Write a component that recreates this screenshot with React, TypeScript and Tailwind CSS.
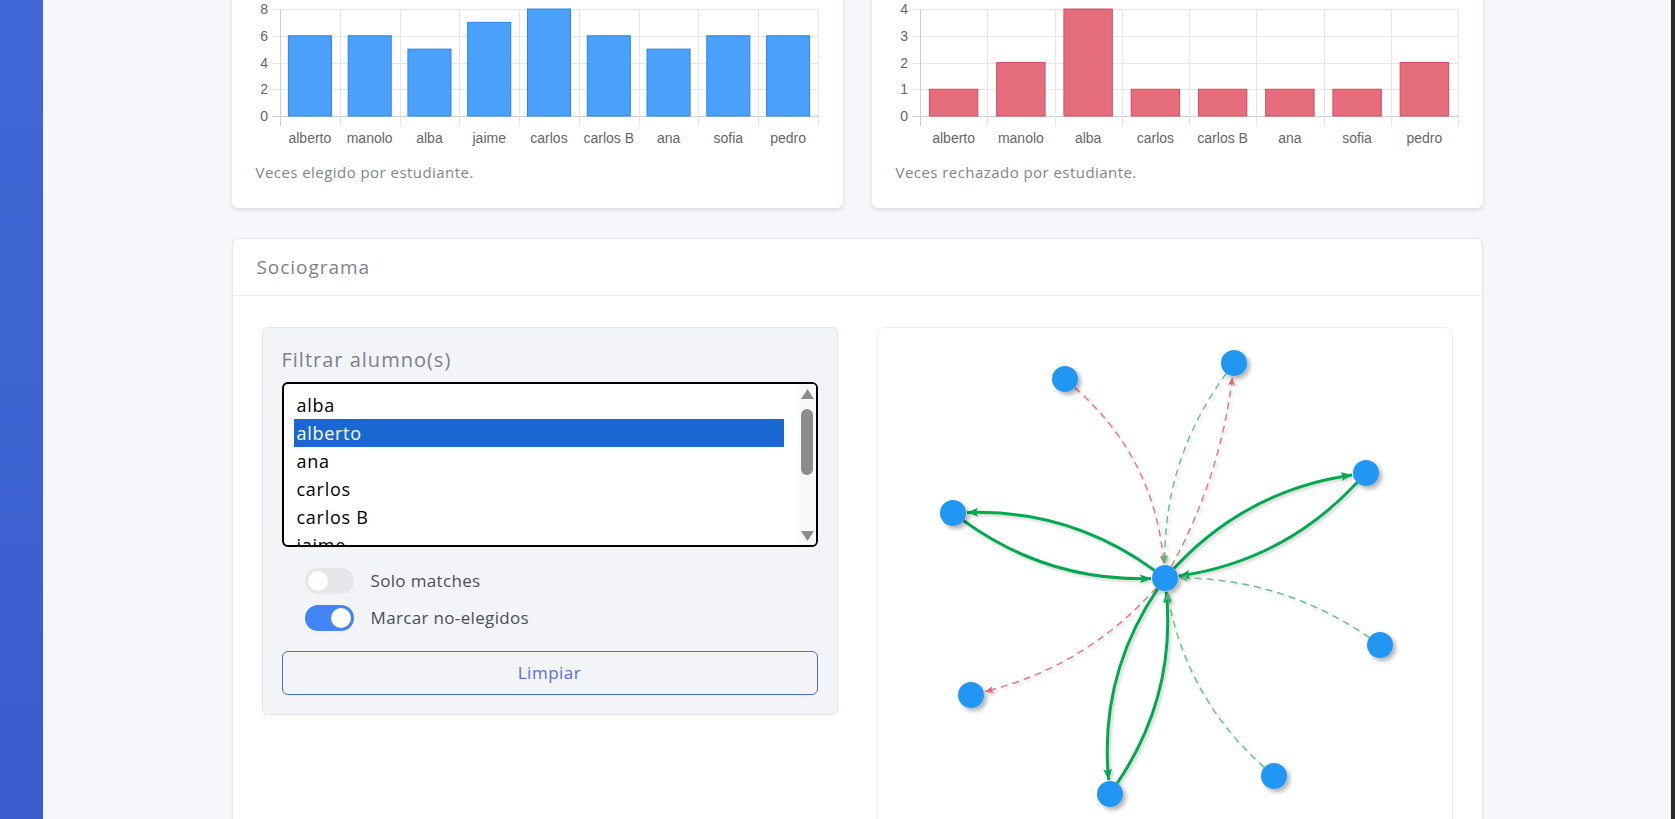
import React, { useState } from 'react';

type Pt = { x: number; y: number };

const chosen = {
  labels: ['alberto', 'manolo', 'alba', 'jaime', 'carlos', 'carlos B', 'ana', 'sofia', 'pedro'],
  values: [6, 6, 5, 7, 8, 6, 5, 6, 6],
};

const rejected = {
  labels: ['alberto', 'manolo', 'alba', 'carlos', 'carlos B', 'ana', 'sofia', 'pedro'],
  values: [1, 2, 4, 1, 1, 1, 1, 2],
};

const students = ['alba', 'alberto', 'ana', 'carlos', 'carlos B', 'jaime', 'manolo'];

interface BarChartProps {
  labels: string[];
  values: number[];
  max: number;
  step: number;
  fill: string;
  stroke: string;
}

const BarChart: React.FC<BarChartProps> = ({ labels, values, max, step, fill, stroke }) => {
  const axis = 24;
  const right = 562;
  const top = 9;
  const bottom = 116;
  const cat = (right - axis) / labels.length;
  const yOf = (v: number) => bottom - (v / max) * (bottom - top);
  const ticks: number[] = [];
  for (let t = 0; t <= max; t += step) ticks.push(t);

  return (
    <svg width={563} height={150} className="block" fontFamily="'Liberation Sans', Arial, sans-serif">
      {ticks.map((t) => (
        <g key={t}>
          <line
            x1={axis - 8}
            x2={right}
            y1={Math.round(yOf(t)) + 0.5}
            y2={Math.round(yOf(t)) + 0.5}
            stroke={t === 0 ? '#cfcfcf' : '#e6e6e6'}
          />
          <text x={axis - 12} y={yOf(t) + 5} textAnchor="end" fontSize={14} fill="#666">
            {t}
          </text>
        </g>
      ))}
      {labels.map((_, i) => (
        <line
          key={i}
          x1={Math.round(axis + i * cat) + 0.5}
          x2={Math.round(axis + i * cat) + 0.5}
          y1={top}
          y2={bottom + 10}
          stroke={i === 0 ? '#cfcfcf' : '#e6e6e6'}
        />
      ))}
      <line x1={right + 0.5} x2={right + 0.5} y1={top} y2={bottom + 10} stroke="#e6e6e6" />
      {values.map((v, i) => {
        const w = cat * 0.72;
        const x = axis + i * cat + (cat - w) / 2;
        return (
          <rect
            key={i}
            x={x}
            y={yOf(v)}
            width={w}
            height={bottom - yOf(v)}
            fill={fill}
            stroke={stroke}
            strokeWidth={1}
          />
        );
      })}
      {labels.map((l, i) => (
        <text key={l} x={axis + i * cat + cat / 2} y={143} textAnchor="middle" fontSize={14} fill="#666">
          {l}
        </text>
      ))}
    </svg>
  );
};

const nodes: Record<string, Pt> = {
  center: { x: 287, y: 250 },
  topLeft: { x: 187, y: 51 },
  topRight: { x: 356, y: 35 },
  right: { x: 488, y: 145 },
  left: { x: 75, y: 185 },
  farRight: { x: 502, y: 317 },
  bottomLeft: { x: 93, y: 367 },
  bottom: { x: 232, y: 466 },
  bottomRight: { x: 396, y: 448 },
};

type Kind = 'match' | 'choice' | 'reject';

const edges: { from: string; to: string; bend: number; kind: Kind }[] = [
  { from: 'center', to: 'left', bend: 38, kind: 'match' },
  { from: 'left', to: 'center', bend: 38, kind: 'match' },
  { from: 'center', to: 'right', bend: -40, kind: 'match' },
  { from: 'right', to: 'center', bend: -40, kind: 'match' },
  { from: 'center', to: 'bottom', bend: 40, kind: 'match' },
  { from: 'bottom', to: 'center', bend: 40, kind: 'match' },
  { from: 'topLeft', to: 'center', bend: -45, kind: 'reject' },
  { from: 'center', to: 'topRight', bend: 22, kind: 'reject' },
  { from: 'topRight', to: 'center', bend: 38, kind: 'choice' },
  { from: 'center', to: 'bottomLeft', bend: -35, kind: 'reject' },
  { from: 'farRight', to: 'center', bend: 35, kind: 'choice' },
  { from: 'bottomRight', to: 'center', bend: -40, kind: 'choice' },
];

const R = 13;

function edgePath(a: Pt, b: Pt, bend: number) {
  const dx = b.x - a.x;
  const dy = b.y - a.y;
  const len = Math.hypot(dx, dy);
  const c = { x: (a.x + b.x) / 2 + (-dy / len) * bend, y: (a.y + b.y) / 2 + (dx / len) * bend };
  const sLen = Math.hypot(c.x - a.x, c.y - a.y);
  const s = { x: a.x + ((c.x - a.x) / sLen) * R, y: a.y + ((c.y - a.y) / sLen) * R };
  const eLen = Math.hypot(b.x - c.x, b.y - c.y);
  const e = { x: b.x - ((b.x - c.x) / eLen) * (R + 1), y: b.y - ((b.y - c.y) / eLen) * (R + 1) };
  return `M${s.x},${s.y} Q${c.x},${c.y} ${e.x},${e.y}`;
}

const edgeStyle: Record<Kind, { stroke: string; width: number; dash?: string; marker: string; opacity: number }> = {
  match: { stroke: '#00a84f', width: 3, marker: 'url(#arMatch)', opacity: 1 },
  choice: { stroke: '#3fae63', width: 1.5, dash: '7 5', marker: 'url(#arChoice)', opacity: 0.75 },
  reject: { stroke: '#e0606f', width: 1.5, dash: '7 5', marker: 'url(#arReject)', opacity: 0.85 },
};

const Sociogram: React.FC = () => (
  <svg className="absolute inset-0 h-full w-full">
    <defs>
      <marker id="arMatch" viewBox="0 0 10 8" refX="10" refY="4" markerWidth="11" markerHeight="9" markerUnits="userSpaceOnUse" orient="auto">
        <path d="M0,0 L10,4 L0,8 L2,4 z" fill="#00a84f" />
      </marker>
      <marker id="arChoice" viewBox="0 0 10 8" refX="10" refY="4" markerWidth="9" markerHeight="7" markerUnits="userSpaceOnUse" orient="auto">
        <path d="M0,0 L10,4 L0,8 L2,4 z" fill="#5bb878" />
      </marker>
      <marker id="arReject" viewBox="0 0 10 8" refX="10" refY="4" markerWidth="9" markerHeight="7" markerUnits="userSpaceOnUse" orient="auto">
        <path d="M0,0 L10,4 L0,8 L2,4 z" fill="#e36a78" />
      </marker>
      <filter id="edgeShadow" x="-20%" y="-20%" width="140%" height="140%">
        <feDropShadow dx="2" dy="2" stdDeviation="1.5" floodColor="#000" floodOpacity="0.18" />
      </filter>
      <filter id="nodeShadow" x="-50%" y="-50%" width="200%" height="200%">
        <feDropShadow dx="3" dy="3" stdDeviation="2" floodColor="#000" floodOpacity="0.3" />
      </filter>
    </defs>
    {edges.map((ed, i) => {
      const st = edgeStyle[ed.kind];
      return (
        <path
          key={i}
          d={edgePath(nodes[ed.from], nodes[ed.to], ed.bend)}
          fill="none"
          stroke={st.stroke}
          strokeWidth={st.width}
          strokeDasharray={st.dash}
          strokeOpacity={st.opacity}
          markerEnd={st.marker}
          filter="url(#edgeShadow)"
        />
      );
    })}
    {Object.entries(nodes).map(([k, p]) => (
      <circle key={k} cx={p.x} cy={p.y} r={R} fill="#2196f3" filter="url(#nodeShadow)" />
    ))}
  </svg>
);

const Toggle: React.FC<{ on: boolean; label: string; onChange: () => void }> = ({ on, label, onChange }) => (
  <button type="button" onClick={onChange} className="flex h-[26px] items-center gap-[17px]">
    <span
      className={
        on
          ? 'flex h-[26px] w-[49px] items-center justify-end rounded-full bg-[#4285f4] px-[3px]'
          : 'flex h-[26px] w-[49px] items-center justify-start rounded-full bg-[#e4e6ea] px-[3px]'
      }
    >
      <span className="h-[20px] w-[20px] rounded-full bg-white" />
    </span>
    <span className="text-[17px] tracking-[0.02em] text-[#4a4f57]">{label}</span>
  </button>
);

export default function App() {
  const [selected, setSelected] = useState('alberto');
  const [onlyMatches, setOnlyMatches] = useState(false);
  const [markUnchosen, setMarkUnchosen] = useState(true);

  return (
    <div className="flex h-screen w-full overflow-hidden bg-[#f6f7fb] font-['Open_Sans','Noto_Sans',sans-serif]">
      <aside className="w-[43px] shrink-0 bg-linear-to-b from-[#4168d6] to-[#395dcc]" />
      <main className="min-w-0 flex-1 overflow-hidden">
        <div className="mx-auto -mt-5 w-[1251px]">
          <div className="grid grid-cols-2 gap-[29px]">
            <div className="rounded-md bg-white px-6 pb-[26px] pt-5 shadow-[0_2px_4px_rgba(0,0,0,0.13)]">
              <BarChart {...chosen} max={8} step={2} fill="#4aa0fb" stroke="#2a86e4" />
              <p className="mt-3 text-[15px] leading-5 tracking-[0.03em] text-[#80858f]">Veces elegido por estudiante.</p>
            </div>
            <div className="rounded-md bg-white px-6 pb-[26px] pt-5 shadow-[0_2px_4px_rgba(0,0,0,0.13)]">
              <BarChart {...rejected} max={4} step={1} fill="#e66e7c" stroke="#cf4f61" />
              <p className="mt-3 text-[15px] leading-5 tracking-[0.03em] text-[#80858f]">Veces rechazado por estudiante.</p>
            </div>
          </div>

          <div className="mt-[30px] rounded-md border border-[#e6e8ee] bg-white shadow-[0_1px_3px_rgba(0,0,0,0.06)]">
            <div className="flex h-[57px] items-center border-b border-[#eceef2] px-6 text-[19px] tracking-[0.05em] text-[#7c818b]">
              Sociograma
            </div>
            <div className="grid grid-cols-2 gap-[39px] px-[29px] pb-[29px] pt-[31px]">
              <div className="self-start rounded-md border border-[#e2e4ea] bg-[#f3f4f8] px-[19px] pb-[19px] pt-[20px]">
                <div className="mb-[10px] text-[20px] leading-6 tracking-[0.05em] text-[#7b808a]">Filtrar alumno(s)</div>
                <div className="flex h-[165px] overflow-hidden rounded-[6px] border-2 border-black bg-white">
                  <ul className="flex-1 pl-[10px] pr-[15px] pt-[7px]">
                    {students.map((s) => (
                      <li
                        key={s}
                        onClick={() => setSelected(s)}
                        className={
                          s === selected
                            ? 'h-[28px] cursor-default bg-[#1a67d2] px-[3px] text-[18px] leading-[28px] tracking-[0.04em] text-white'
                            : 'h-[28px] cursor-default px-[3px] text-[18px] leading-[28px] tracking-[0.04em] text-black'
                        }
                      >
                        {s}
                      </li>
                    ))}
                  </ul>
                  <div className="flex w-[17px] flex-col items-center bg-[#f8f8f8] pb-[4px] pt-[5px]">
                    <svg width="13" height="10" viewBox="0 0 13 10">
                      <polygon points="6.5,0 13,10 0,10" fill="#8c8c8c" />
                    </svg>
                    <div className="mt-[10px] h-[66px] w-[12px] rounded-full bg-[#8c8c8c]" />
                    <div className="flex-1" />
                    <svg width="13" height="10" viewBox="0 0 13 10">
                      <polygon points="0,0 13,0 6.5,10" fill="#8c8c8c" />
                    </svg>
                  </div>
                </div>
                <div className="mt-[21px] flex flex-col gap-[11px] pl-[23px]">
                  <Toggle on={onlyMatches} label="Solo matches" onChange={() => setOnlyMatches(!onlyMatches)} />
                  <Toggle on={markUnchosen} label="Marcar no-elegidos" onChange={() => setMarkUnchosen(!markUnchosen)} />
                </div>
                <button
                  type="button"
                  onClick={() => setSelected('')}
                  className="mt-[20px] h-[44px] w-full rounded-md border border-[#4a6cd0] text-[17px] tracking-[0.03em] text-[#5570d8]"
                >
                  Limpiar
                </button>
              </div>
              <div className="relative h-[520px] rounded-lg border border-[#eceef2] bg-white">
                <Sociogram />
              </div>
            </div>
          </div>
        </div>
      </main>
      <div className="w-[4px] shrink-0 bg-[#2b2b2b]" />
    </div>
  );
}
